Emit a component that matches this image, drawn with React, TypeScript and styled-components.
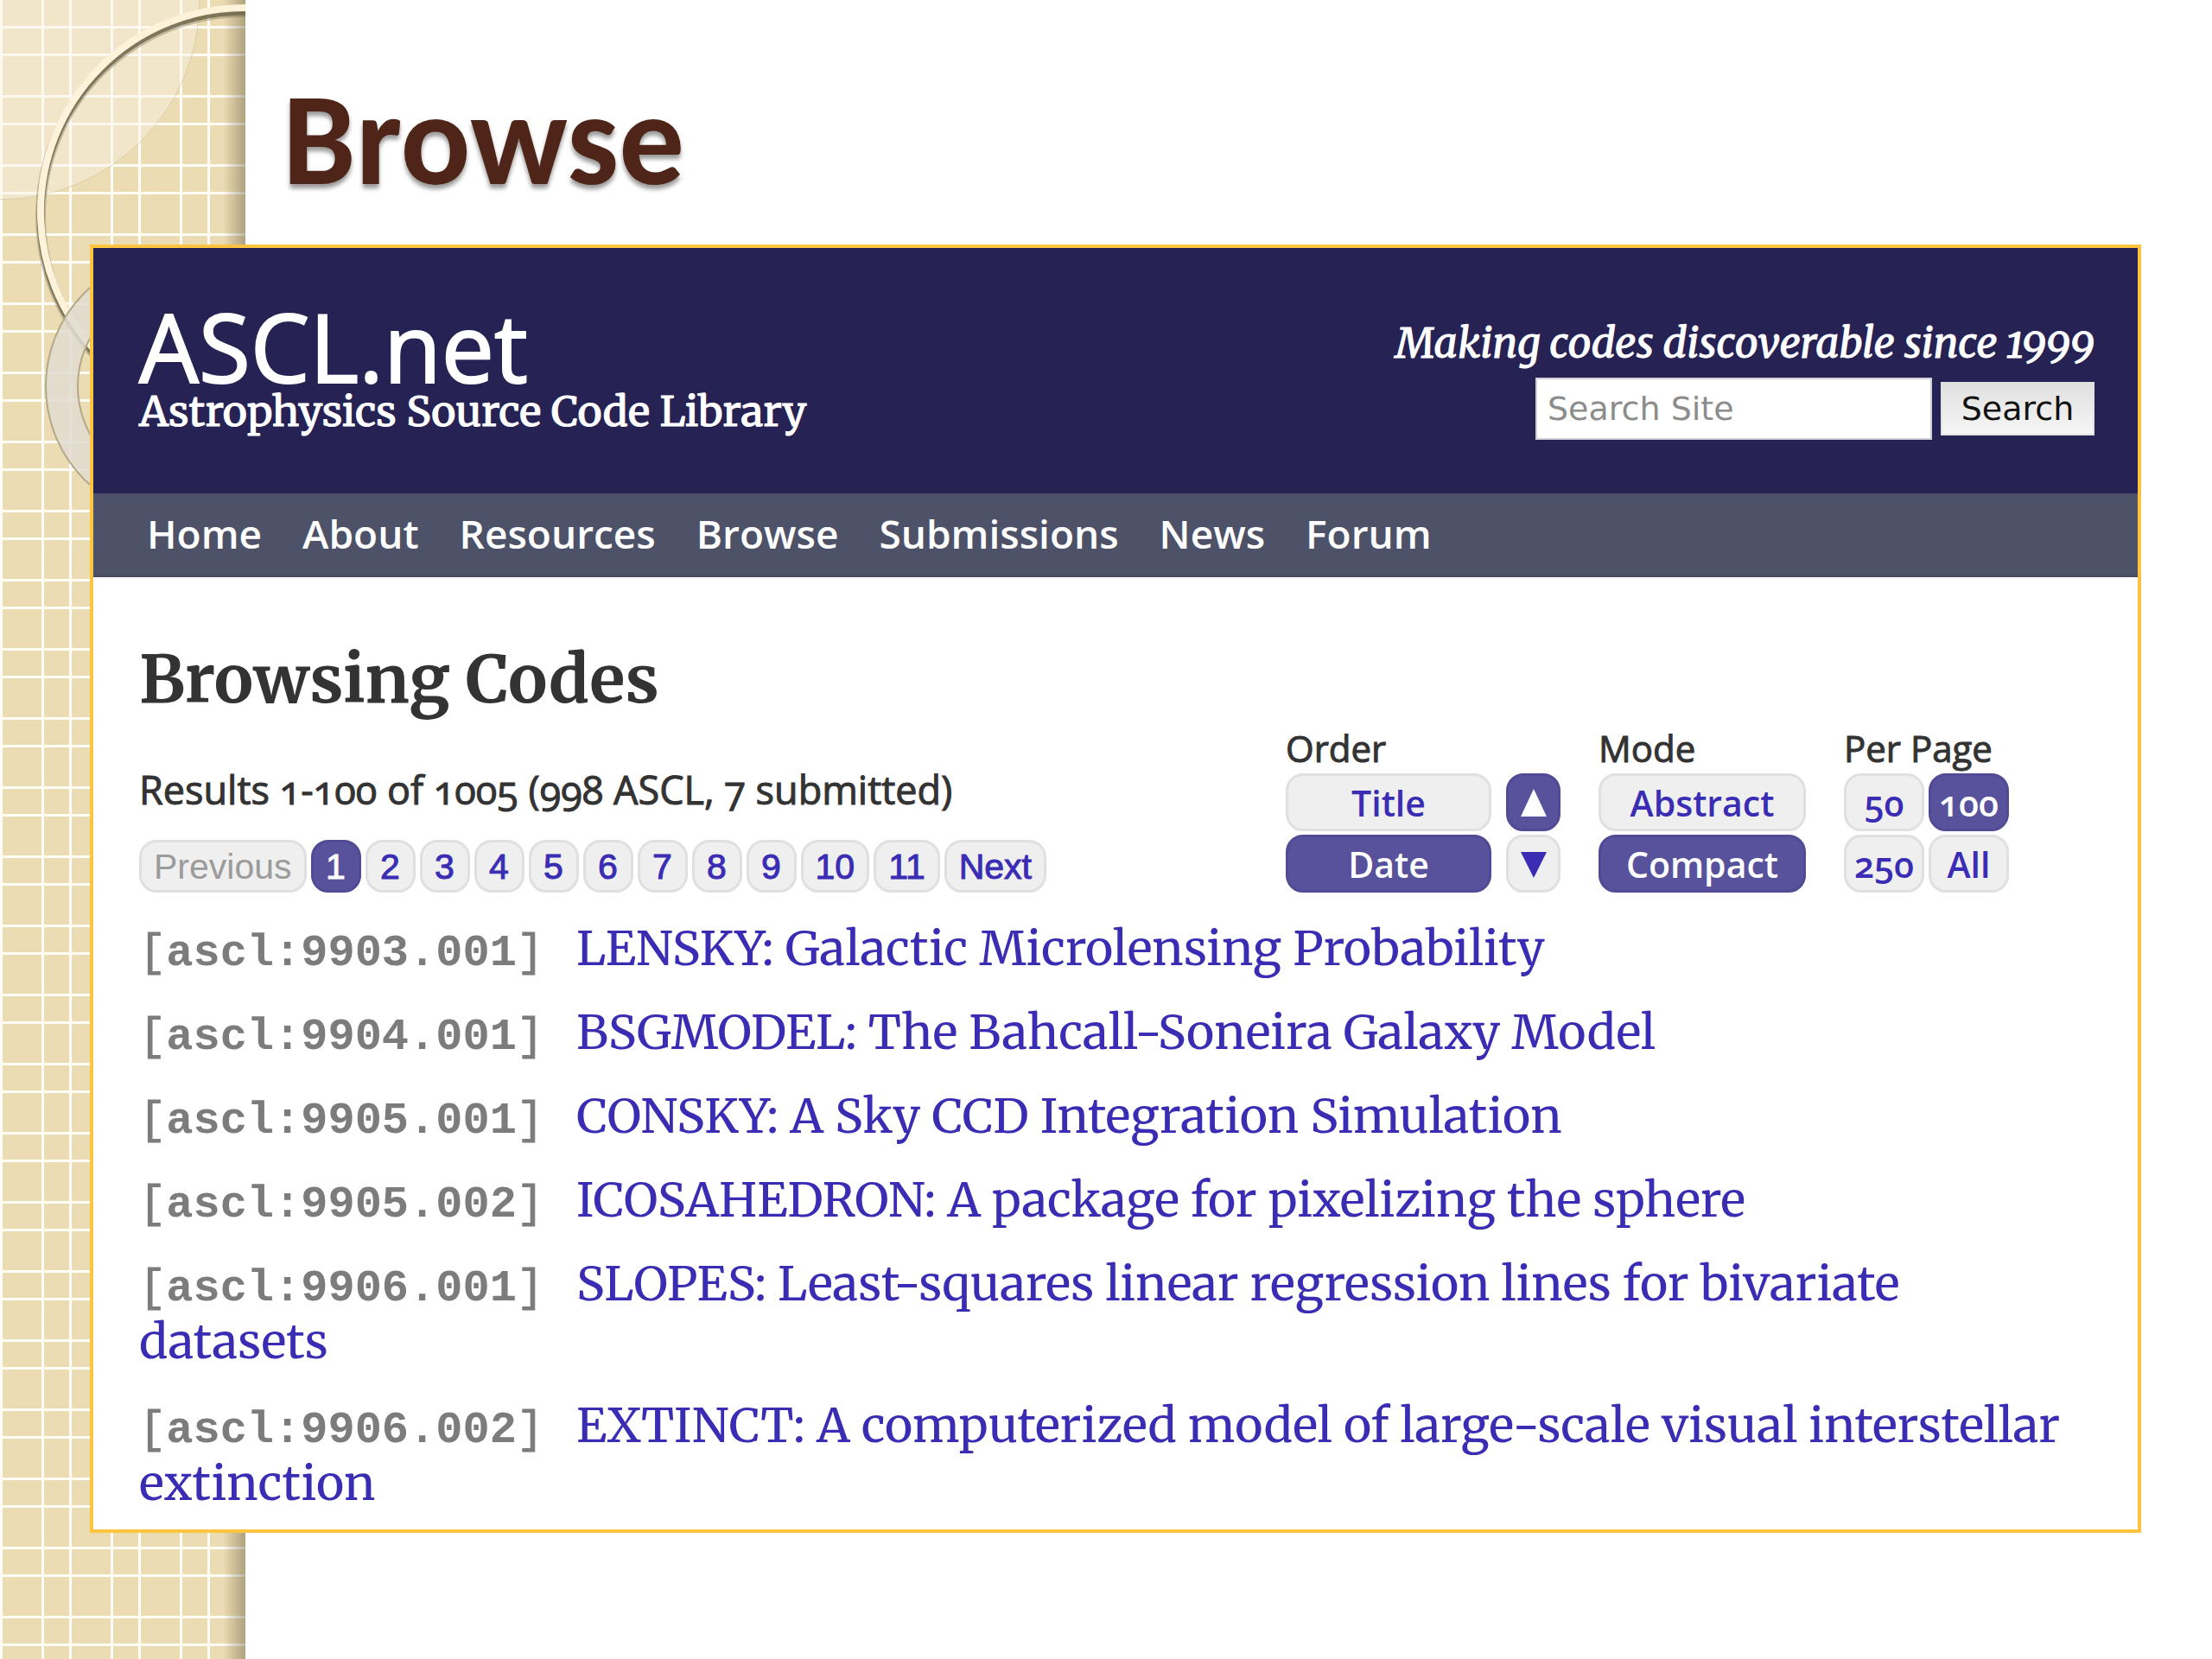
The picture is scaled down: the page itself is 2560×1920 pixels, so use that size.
import React from 'react';
import styled, { createGlobalStyle, css } from 'styled-components';

const serif = `Merriweather, "DejaVu Serif Condensed", "Liberation Serif", serif`;
const sans = `"Open Sans", "Noto Sans", sans-serif`;

const GlobalStyle = createGlobalStyle`
  *, *::before, *::after { box-sizing: border-box; }
  body { margin: 0; background: #fff; }
  h1, h2, p, ul, ol { margin: 0; padding: 0; }
  a { color: inherit; text-decoration: none; }
`;

const Slide = styled.div`
  position: relative;
  min-height: 100vh;
  padding: 0 82px 148px 104px;
  overflow: hidden;
`;

const Strip = styled.div`
  position: absolute;
  inset: 0 auto 0 0;
  width: 284px;
  background:
    linear-gradient(to right, transparent 258px, rgba(90, 80, 50, 0.42) 284px),
    repeating-linear-gradient(to right, #fffdf6 0 3px, transparent 3px 48px, #fffdf6 48px 51px, transparent 51px 80px),
    repeating-linear-gradient(to bottom, transparent 0 30px, #fffdf6 30px 33px, transparent 33px 62px, #fffdf6 62px 65px, transparent 65px 80px),
    #ecdcb4;
`;

const Rings = styled.svg`
  display: block;
  width: 284px;
  height: 640px;
`;

const SlideTitle = styled.h1`
  position: relative;
  padding: 71px 0 30px 223px;
  font: 700 151px/182px Carlito, Lato, sans-serif;
  color: #4f2519;
  text-shadow: 0 5px 5px rgba(0, 0, 0, 0.4);
`;

const Panel = styled.div`
  position: relative;
  border: 4px solid #fdc53f;
  background: #fff;
`;

const Header = styled.header`
  display: flex;
  justify-content: space-between;
  height: 284px;
  padding: 54px 50px 0 53px;
  background: #262254;
  color: #fff;
`;

const Brand = styled.div`
  display: flex;
  flex-direction: column;
`;

const BrandName = styled.a`
  font: 400 109px/120px ${sans};
  -webkit-text-stroke: 2px currentColor;
`;

const BrandText = styled.span`
  font: 400 48px/30px ${serif};
  -webkit-text-stroke: 1px currentColor;
`;

const HeaderSide = styled.div`
  display: flex;
  flex-direction: column;
  align-items: flex-end;
  gap: 4px;
`;

const Tagline = styled.p`
  padding-top: 20px;
  font: italic 400 48px/72px ${serif};
  font-variant-numeric: oldstyle-nums;
  -webkit-text-stroke: 1px currentColor;
`;

const SearchForm = styled.form`
  display: flex;
  align-items: center;
  gap: 10px;
`;

const SearchInput = styled.input`
  width: 459px;
  height: 72px;
  padding: 0 12px;
  border: 2px solid #cfcfd4;
  border-radius: 0;
  background: #fff;
  font: 400 38px/48px "DejaVu Sans", sans-serif;
  &::placeholder { color: #8c8c8c; opacity: 1; }
`;

const SearchButton = styled.button`
  width: 178px;
  height: 62px;
  padding: 0;
  border: 2px solid #e2e2e2;
  background: linear-gradient(#e0e0e0, #f6f6f6);
  font: 400 38px/48px "DejaVu Sans", sans-serif;
  color: #111;
`;

const Nav = styled.nav`
  display: flex;
  gap: 47px;
  height: 97px;
  padding: 0 62px;
  border-bottom: 2px solid #444a5e;
  background: #4d5268;
  color: #fff;
  font: 600 46px/92px ${sans};
`;

const Content = styled.main`
  padding: 72px 52px 20px 53px;
  color: #333;
`;

const Heading = styled.h2`
  margin-bottom: 5px;
  font: 700 76px/92px ${serif};
`;

const Toolbar = styled.div`
  display: flex;
  justify-content: space-between;
  align-items: flex-end;
  padding-right: 97px;
`;

const Summary = styled.div`
  display: flex;
  flex-direction: column;
  gap: 28px;
`;

const ResultCount = styled.p`
  font: 400 45px/60px ${sans};
  font-variant-numeric: oldstyle-nums;
  -webkit-text-stroke: 1px currentColor;
`;

const chip = css<{ $active?: boolean }>`
  margin: 0;
  border: 3px solid ${p => (p.$active ? '#514a94' : '#e0e0e0')};
  border-radius: 20px;
  background: ${p => (p.$active ? '#58519b' : '#efefef')};
  color: ${p => (p.$active ? '#fff' : '#3a2db4')};
`;

const Pager = styled.nav`
  display: flex;
  gap: 5px;
`;

const PageButton = styled.button<{ $active?: boolean }>`
  ${chip}
  min-width: 58px;
  height: 61px;
  padding: 0 14px;
  font: 400 41px/52px "Liberation Sans", Arial, sans-serif;
  -webkit-text-stroke: 1px currentColor;
  &:disabled { color: #9b9b9b; -webkit-text-stroke: 0; }
`;

const Controls = styled.div`
  display: flex;
  gap: 44px;
`;

const Group = styled.div`
  display: flex;
  flex-direction: column;
`;

const GroupLabel = styled.span`
  font: 400 42px/58px ${sans};
  -webkit-text-stroke: 1px currentColor;
`;

const Options = styled.div<{ $columns: string; $gap: number }>`
  display: grid;
  grid-template-columns: ${p => p.$columns};
  gap: 4px ${p => p.$gap}px;
`;

const Option = styled.button<{ $active?: boolean }>`
  ${chip}
  display: flex;
  align-items: center;
  justify-content: center;
  height: 67px;
  padding: 0;
  font: 600 41px/56px ${sans};
  font-variant-numeric: oldstyle-nums;
`;

const Arrow = styled.svg`
  width: 32px;
  height: 34px;
  fill: currentColor;
`;

const CodeList = styled.ol`
  display: flex;
  flex-direction: column;
  gap: 30px;
  padding-top: 31px;
  list-style: none;
`;

const CodeItem = styled.li`
  font: 400 55px/67px ${serif};
  color: #3a2db4;
`;

const CodeId = styled.span`
  margin-right: 38px;
  font: 700 52px/40px "Liberation Mono", "Courier New", monospace;
  color: #7c7c7c;
`;

const Bracket = styled.span`
  font-weight: 400;
  -webkit-text-stroke: 1px currentColor;
`;

const navItems = ['Home', 'About', 'Resources', 'Browse', 'Submissions', 'News', 'Forum'];
const pages = [1, 2, 3, 4, 5, 6, 7, 8, 9, 10, 11];
const codes = [
  ['ascl:9903.001', 'LENSKY: Galactic Microlensing Probability'],
  ['ascl:9904.001', 'BSGMODEL: The Bahcall-Soneira Galaxy Model'],
  ['ascl:9905.001', 'CONSKY: A Sky CCD Integration Simulation'],
  ['ascl:9905.002', 'ICOSAHEDRON: A package for pixelizing the sphere'],
  ['ascl:9906.001', 'SLOPES: Least-squares linear regression lines for bivariate datasets'],
  ['ascl:9906.002', 'EXTINCT: A computerized model of large-scale visual interstellar extinction'],
];

export default function App() {
  return (
    <>
      <GlobalStyle />
      <Slide>
        <Strip aria-hidden="true">
          <Rings viewBox="0 0 284 640">
            <circle cx="0" cy="0" r="231" fill="#fbf4ea" fillOpacity="0.42" stroke="#cdbf98" strokeOpacity="0.6" strokeWidth="1" />
            <circle cx="283" cy="250" r="236" fill="none" stroke="#6d654a" strokeOpacity="0.35" strokeWidth="12" />
            <circle cx="283" cy="249" r="236" fill="none" stroke="#6d654a" strokeOpacity="0.8" strokeWidth="9" />
            <circle cx="283" cy="245" r="236" fill="none" stroke="#fdf2da" strokeWidth="8" />
            <path
              d="M53 447a153 153 0 1 0 306 0a153 153 0 1 0 -306 0zM90 447a115 115 0 1 1 230 0a115 115 0 1 1 -230 0z"
              fill="#e1dcd0"
              fillOpacity="0.86"
              fillRule="evenodd"
              stroke="#b3a888"
              strokeWidth="2"
            />
          </Rings>
        </Strip>
        <SlideTitle>Browse</SlideTitle>
        <Panel>
          <Header>
            <Brand>
              <BrandName href="#">ASCL.net</BrandName>
              <BrandText>Astrophysics Source Code Library</BrandText>
            </Brand>
            <HeaderSide>
              <Tagline>Making codes discoverable since 1999</Tagline>
              <SearchForm onSubmit={e => e.preventDefault()}>
                <SearchInput type="text" placeholder="Search Site" aria-label="Search Site" />
                <SearchButton type="submit">Search</SearchButton>
              </SearchForm>
            </HeaderSide>
          </Header>
          <Nav>
            {navItems.map(item => (
              <a key={item} href="#">{item}</a>
            ))}
          </Nav>
          <Content>
            <Heading>Browsing Codes</Heading>
            <Toolbar>
              <Summary>
                <ResultCount>Results 1-100 of 1005 (998 ASCL, 7 submitted)</ResultCount>
                <Pager>
                  <PageButton disabled>Previous</PageButton>
                  {pages.map(n => (
                    <PageButton key={n} $active={n === 1}>{n}</PageButton>
                  ))}
                  <PageButton>Next</PageButton>
                </Pager>
              </Summary>
              <Controls>
                <Group role="group" aria-labelledby="order">
                  <GroupLabel id="order">Order</GroupLabel>
                  <Options $columns="238px 63px" $gap={17}>
                    <Option>Title</Option>
                    <Option $active aria-label="Ascending">
                      <Arrow viewBox="0 0 32 34"><path d="M16 1L31 33H1z" /></Arrow>
                    </Option>
                    <Option $active>Date</Option>
                    <Option aria-label="Descending">
                      <Arrow viewBox="0 0 32 34"><path d="M16 33L31 3H1z" /></Arrow>
                    </Option>
                  </Options>
                </Group>
                <Group role="group" aria-labelledby="mode">
                  <GroupLabel id="mode">Mode</GroupLabel>
                  <Options $columns="240px" $gap={0}>
                    <Option>Abstract</Option>
                    <Option $active>Compact</Option>
                  </Options>
                </Group>
                <Group role="group" aria-labelledby="perpage">
                  <GroupLabel id="perpage">Per Page</GroupLabel>
                  <Options $columns="93px 93px" $gap={5}>
                    <Option>50</Option>
                    <Option $active>100</Option>
                    <Option>250</Option>
                    <Option>All</Option>
                  </Options>
                </Group>
              </Controls>
            </Toolbar>
            <CodeList>
              {codes.map(([id, name]) => (
                <CodeItem key={id}>
                  <CodeId><Bracket>[</Bracket>{id}<Bracket>]</Bracket></CodeId>
                  <a href="#">{name}</a>
                </CodeItem>
              ))}
            </CodeList>
          </Content>
        </Panel>
      </Slide>
    </>
  );
}
